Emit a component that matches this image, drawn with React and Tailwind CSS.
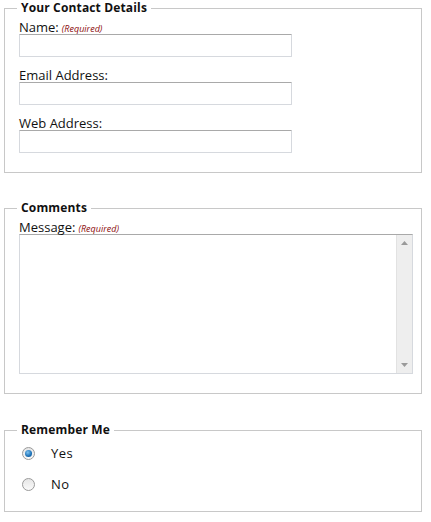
import React from "react";

const font = { fontFamily: '"Open Sans", "Noto Sans", sans-serif' };

function Req() {
  return <em className="text-[9px] text-[#8b0a0a] ml-[3px] italic">(Required)</em>;
}

function Field({ label, req, mb = "mb-[9px]" }) {
  return (
    <div className={mb}>
      <label className="block text-[13px] leading-[18px] text-[#111] h-[16px]">
        {label}
        {req && <Req />}
      </label>
      <div className="w-[273px] h-[23px] border border-[#d6d9de] border-t-[#a9a9a9] bg-white rounded-[1px]" />
    </div>
  );
}

function Radio({ checked, label }) {
  return (
    <div className="flex items-center h-[31px]">
      <div className="w-[13px] h-[13px] ml-[3px] rounded-full border border-[#9a9a9a] bg-gradient-to-b from-[#e6e6e6] to-[#fafafa] flex items-center justify-center">
        {checked && (
          <div className="w-[7px] h-[7px] rounded-full bg-[radial-gradient(circle_at_40%_35%,#7fc3f0,#1a6fb5_60%,#0c4c8c)]" />
        )}
      </div>
      <span className="ml-[16px] text-[13px] text-[#111] tracking-[0.5px]">{label}</span>
    </div>
  );
}

const legendCls = "-ml-[2px] px-[4px] text-[12px] leading-[16px] font-bold text-[#111] tracking-[0.15px]";

export default function App() {
  return (
    <div style={font} className="pl-[4px] bg-white min-h-[522px]">
      <fieldset className="w-[418px] border border-[#c8c8c8] pl-[14px] pb-[19px] pt-[2px]">
        <legend className={legendCls}>Your Contact Details</legend>
        <Field label="Name:" req />
        <Field label="Email Address:" />
        <Field label="Web Address:" mb="mb-0" />
      </fieldset>

      <fieldset className="w-[418px] mt-[27px] border border-[#c8c8c8] pl-[14px] pb-[19px] pt-[2px]">
        <legend className={legendCls}>Comments</legend>
        <label className="block text-[13px] leading-[18px] text-[#111] h-[16px]">
          Message:
          <Req />
        </label>
        <div className="w-[394px] h-[140px] border border-[#d6d9de] border-t-[#a9a9a9] bg-white flex justify-end">
          <div className="w-[16px] h-full bg-[#eeeeee] border-l border-[#e2e2e2] flex flex-col justify-between items-center py-[6px]">
            <svg width="7" height="4" viewBox="0 0 7 4"><path d="M3.5 0 L7 4 L0 4 Z" fill="#9a9a9a" /></svg>
            <svg width="7" height="4" viewBox="0 0 7 4"><path d="M0 0 L7 0 L3.5 4 Z" fill="#9a9a9a" /></svg>
          </div>
        </div>
      </fieldset>

      <fieldset className="w-[418px] mt-[28px] border border-[#c8c8c8] pl-[14px] pb-[11px] pt-[0px]">
        <legend className={legendCls}>Remember Me</legend>
        <Radio checked label="Yes" />
        <Radio label="No" />
      </fieldset>
    </div>
  );
}
